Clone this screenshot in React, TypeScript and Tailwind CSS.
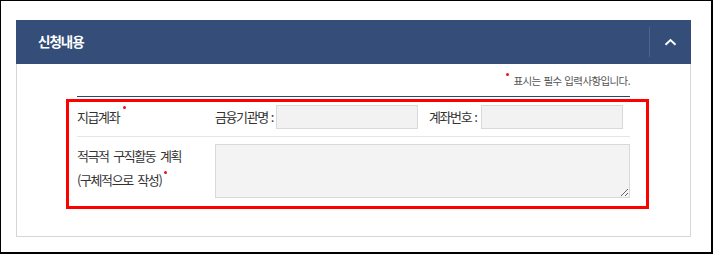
import React from "react";

const KR = { fontFamily: '"Noto Sans CJK KR", "Noto Sans", sans-serif' };

function Dot({ className = "" }: { className?: string }) {
  return <span className={"absolute w-[3px] h-[3px] rounded-full bg-[#e8141c] " + className} />;
}

export default function App() {
  return (
    <div
      className="w-[713px] h-[254px] bg-white border-t border-l border-r-2 border-b-2 border-black pt-[19px] pl-[15px]"
      style={KR}
    >
      <div className="w-[675px]">
        {/* header */}
        <div className="h-[44px] bg-[#344e79] flex items-center justify-between">
          <span className="pl-[22px] text-white text-[13.5px] font-bold tracking-[-1px] leading-none">신청내용</span>
          <div className="flex items-center h-full">
            <div className="w-px h-[30px] bg-[#4b6490]" />
            <div className="w-[41px] flex items-center justify-center">
              <svg width="13" height="8" viewBox="0 0 13 8" fill="none">
                <path d="M1.5 6.8 L6.5 2 L11.5 6.8" stroke="white" strokeWidth="1.9" />
              </svg>
            </div>
          </div>
        </div>
        {/* content */}
        <div className="border border-t-0 border-[#d6d6d6] h-[173px] px-[60px] pt-[1px]">
          <div className="h-[31px] flex items-center justify-end pt-[1px]">
            <span className="relative text-[10.5px] tracking-[-0.6px] [word-spacing:1px] text-[#555] leading-none pl-[7px]">
              <Dot className="left-0 top-[-3px]" />
              표시는 필수 입력사항입니다.
            </span>
          </div>
          <div className="h-px bg-[#2c4470]" />
          <div className="relative">
            {/* red annotation box */}
            <div className="absolute left-[-11px] top-[2px] w-[583px] h-[110px] border-[3px] border-[#ff0000] pointer-events-none" />
            {/* row 1 */}
            <div className="flex items-center h-[40px] border-b border-[#e6e6e6] text-[13px] tracking-[-1.4px] [word-spacing:1.5px] text-[#333] whitespace-nowrap">
              <div className="w-[138px] relative">
                <span className="relative">
                  지급계좌
                  <Dot className="right-[-7px] top-[-1px]" />
                </span>
              </div>
              <span className="w-[61px]">금융기관명 :</span>
              <div className="w-[142px] h-[24px] bg-[#f2f2f2] border border-[#d9d9d9]" />
              <span className="ml-[11px] w-[52px]">계좌번호 :</span>
              <div className="w-[142px] h-[24px] bg-[#f2f2f2] border border-[#d9d9d9]" />
            </div>
            {/* row 2 */}
            <div className="flex pt-[7px] text-[13px] tracking-[-1.4px] [word-spacing:3px] text-[#333] whitespace-nowrap">
              <div className="w-[138px] leading-[24px]">
                <div>적극적 구직활동 계획</div>
                <div>
                  <span className="relative">
                    (구체적으로 작성)
                    <Dot className="right-[-6px] top-[1px]" />
                  </span>
                </div>
              </div>
              <textarea className="w-[415px] h-[54px] bg-[#f3f3f3] border border-[#d9d9d9] outline-none" />
            </div>
          </div>
        </div>
      </div>
    </div>
  );
}
